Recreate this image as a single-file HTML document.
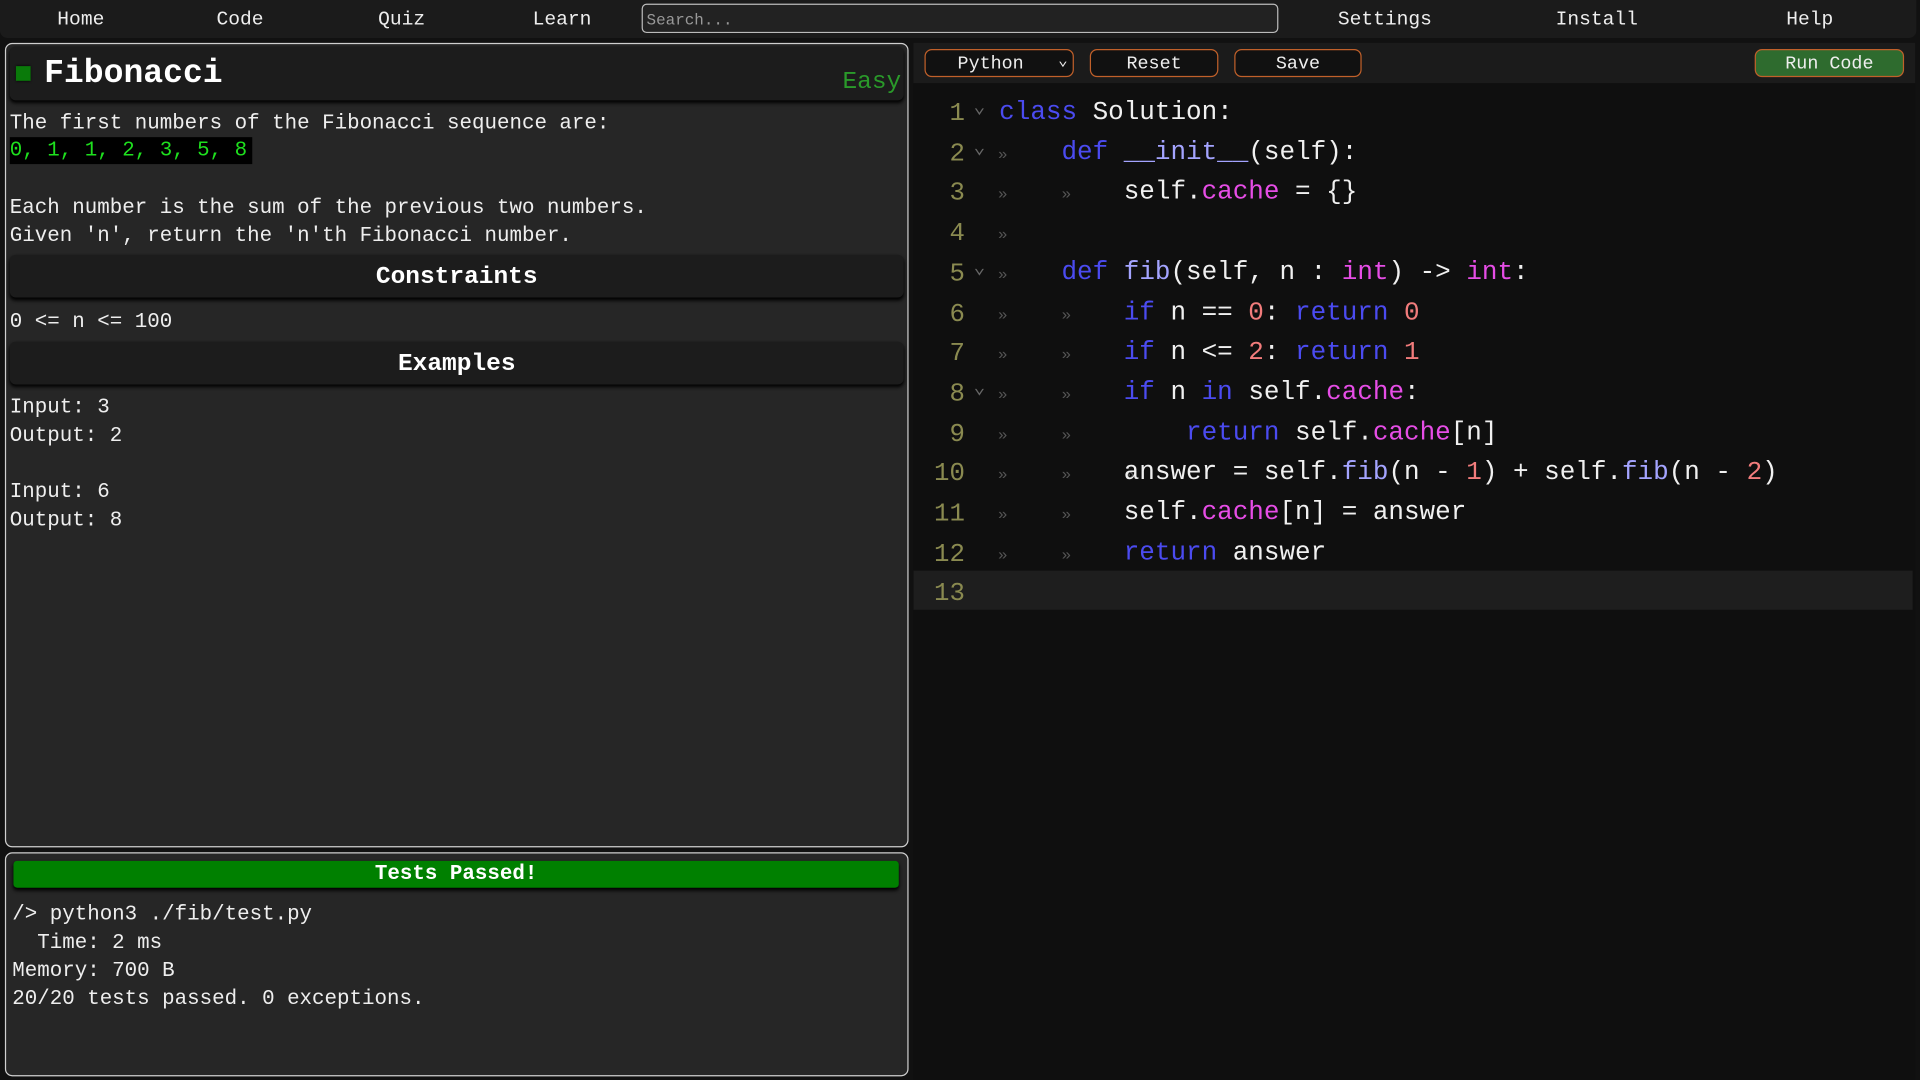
<!DOCTYPE html>
<html><head><meta charset="utf-8"><style>
html,body{margin:0;padding:0;background:#111;overflow:hidden;width:1920px;height:1080px}
#w{position:absolute;left:0;top:0;width:1568px;height:882px;transform:scale(1.224490);transform-origin:0 0;font-family:"Liberation Mono",monospace;color:#eee}
.a{position:absolute;white-space:pre}
.nav{left:0;top:0;width:1565px;height:31px;background:#1b1b1b;border-radius:0 0 6px 6px}
.ni{top:7px;font-size:16px;color:#eee;transform:translateX(-50%)}
.search{left:524px;top:3px;height:24px;border:1px solid #bbb;border-radius:4px;background:#222;color:#999;font-size:13px;line-height:25px;padding-left:3px;box-sizing:border-box;width:520px}
.panel{border:1px solid #cfcfcf;border-radius:6px;background:#262626;box-sizing:border-box}
.hdr{background:#1c1c1c;border-radius:5px;box-shadow:0 2px 3px #000}
.t{font-size:17px;left:8px;line-height:23px}
.h2{font-size:20px;font-weight:bold;text-align:center;line-height:37px;color:#fff}
.btn{top:40px;height:23px;border:1.5px solid #c0602a;border-radius:6px;box-sizing:border-box;font-size:15px;text-align:center;line-height:23px;color:#eee;background:#111}
.ln{font-size:21px;color:#8a8a50;width:40px;text-align:right;left:748px}
.cd{font-size:21.2px;left:816px;color:#f0f0f0}
.tab{font-size:13px;color:#555}
.fold{font-size:16px;color:#666;left:795px}
.k{color:#4b4bf0}.f{color:#a4a4ff}.p{color:#e64de6}.n{color:#f27c7c}
</style></head><body><div id="w">
<div class="a nav"></div>
<div class="a ni" style="left:66px">Home</div>
<div class="a ni" style="left:196px">Code</div>
<div class="a ni" style="left:328px">Quiz</div>
<div class="a ni" style="left:459px">Learn</div>
<div class="a search">Search...</div>
<div class="a ni" style="left:1131px">Settings</div>
<div class="a ni" style="left:1304px">Install</div>
<div class="a ni" style="left:1478px">Help</div>

<div class="a panel" style="left:4px;top:35px;width:738px;height:657px"></div>
<div class="a hdr" style="left:8px;top:38px;width:730px;height:44px"></div>
<div class="a" style="left:13px;top:54px;width:12px;height:12px;background:#0a7a0a;box-shadow:0 0 2px #000"></div>
<div class="a" style="left:36px;top:46px;font-size:27px;font-weight:bold;color:#fff">Fibonacci</div>
<div class="a" style="left:688px;top:56px;font-size:20px;color:#2a9a2a">Easy</div>
<div class="a t" style="top:90px">The first numbers of the Fibonacci sequence are:</div>
<div class="a t" style="top:112px;background:#000;color:#1ee01e;width:198px;height:22px">0, 1, 1, 2, 3, 5, 8</div>
<div class="a t" style="top:159px">Each number is the sum of the previous two numbers.
Given 'n', return the 'n'th Fibonacci number.</div>
<div class="a hdr h2" style="left:8px;top:208px;width:730px;height:35px">Constraints</div>
<div class="a t" style="top:252px">0 &lt;= n &lt;= 100</div>
<div class="a hdr h2" style="left:8px;top:279px;width:730px;height:35px">Examples</div>
<div class="a t" style="top:322px">Input: 3
Output: 2

Input: 6
Output: 8</div>

<div class="a panel" style="left:4px;top:696px;width:738px;height:183px"></div>
<div class="a" style="left:11px;top:703px;width:723px;height:22px;background:#008000;border-radius:3px;text-align:center;font-size:17px;font-weight:bold;line-height:24px;color:#fff;box-shadow:0 2px 3px #000">Tests Passed!</div>
<div class="a t" style="left:10px;top:736px">/&gt; python3 ./fib/test.py
  Time: 2 ms
Memory: 700 B
20/20 tests passed. 0 exceptions.</div>

<div class="a" style="left:746px;top:35px;width:818px;height:33px;background:#1b1b1b"></div>
<div class="a" style="left:746px;top:68px;width:818px;height:814px;background:#0f0f0f"></div>
<div class="a btn" style="left:755px;width:122px;text-align:left;padding-left:26px">Python<span style="position:absolute;right:4px;top:-3px;font-size:13px">&#8964;</span></div>
<div class="a btn" style="left:890px;width:105px">Reset</div>
<div class="a btn" style="left:1008px;width:104px">Save</div>
<div class="a btn" style="left:1433px;width:122px;background:#2e6b2e">Run Code</div>
<div class="a" style="left:746px;top:466px;width:816px;height:32px;background:#1e1e1e"></div>

<div class="a ln" style="top:78px;line-height:32.7px">1
2
3
4
5
6
7
8
9
10
11
12
13</div>
<div class="a fold" style="top:72px;line-height:32.7px">&#8964;
&#8964;


&#8964;


&#8964;</div>
<div class="a tab" style="left:815px;top:78px;line-height:32.7px">
»
»
»
»
»
»
»
»
»
»
»</div>
<div class="a tab" style="left:867px;top:78px;line-height:32.7px">

»


»
»
»
»
»
»
»</div>
<div class="a tab" style="left:919px;top:78px;line-height:32.7px">








»</div>
<div class="a cd" style="top:76px;line-height:32.7px"><span class="k">class</span> Solution:
    <span class="k">def</span> <span class="f">__init__</span>(self):
        self.<span class="p">cache</span> = {}

    <span class="k">def</span> <span class="f">fib</span>(self, n : <span class="p">int</span>) -&gt; <span class="p">int</span>:
        <span class="k">if</span> n == <span class="n">0</span>: <span class="k">return</span> <span class="n">0</span>
        <span class="k">if</span> n &lt;= <span class="n">2</span>: <span class="k">return</span> <span class="n">1</span>
        <span class="k">if</span> n <span class="k">in</span> self.<span class="p">cache</span>:
            <span class="k">return</span> self.<span class="p">cache</span>[n]
        answer = self.<span class="f">fib</span>(n - <span class="n">1</span>) + self.<span class="f">fib</span>(n - <span class="n">2</span>)
        self.<span class="p">cache</span>[n] = answer
        <span class="k">return</span> answer
</div>
</div></body></html>
